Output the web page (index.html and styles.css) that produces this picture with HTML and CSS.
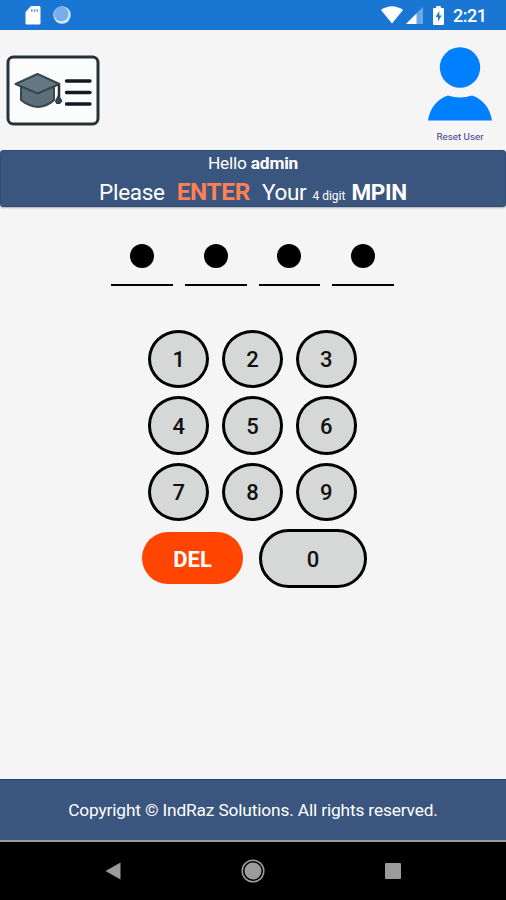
FILE: index.html
```html
<!DOCTYPE html>
<html lang="en">
<head>
    <meta charset="UTF-8">
    <meta name="viewport" content="width=device-width, initial-scale=1.0">
    <title>Enter MPIN</title>
    <link rel="stylesheet" href="styles.css">
</head>
<body>

    <div class="status-bar">
        <svg class="sd-icon" width="16" height="19" viewBox="0 0 16 19">
            <path fill="#fff" d="M6 0h8a1.500 1.500 0 0 1 1.500 1.500v15.500a1.500 1.500 0 0 1-1.500 1.500H2A1.500 1.500 0 0 1 .5 17V6z"/>
            <path fill="#6fa8e6" d="M6 3h1.500v3H6zM8.700 3h1.500v3H8.700zM11.400 3h1.500v3h-1.500z"/>
        </svg>
        <svg class="sync-icon" width="18" height="18" viewBox="0 0 18 18">
            <circle cx="9" cy="9" r="8.700" fill="#d5e8fb"/>
            <circle cx="8.300" cy="8" r="7.300" fill="#78aeea"/>
        </svg>
        <div class="status-right">
            <svg width="22" height="18" viewBox="0 0 22 18">
                <path fill="#fff" d="M0 4Q11-3.500 22 4L11 17.500z"/>
            </svg>
            <svg class="signal-icon" width="17" height="17" viewBox="0 0 17 17">
                <path fill="#6ca6e5" d="M17 0v17H0z"/>
                <path fill="#fff" d="M10.500 6.500V17H0z"/>
            </svg>
            <svg class="battery-icon" width="11" height="19" viewBox="0 0 11 19">
                <path fill="#fff" d="M3.200 0h4.600v2H10a1 1 0 0 1 1 1v15a1 1 0 0 1-1 1H1a1 1 0 0 1-1-1V3a1 1 0 0 1 1-1h2.200z"/>
                <path fill="#1976d2" d="M6.300 5L2.500 11h2.500v4.500l3.700-6H6.300z"/>
            </svg>
            <span class="clock">2:21</span>
        </div>
    </div>

    <div class="header">
        <svg class="logo" width="94" height="71" viewBox="0 0 94 71">
            <rect x="2" y="2" width="90" height="67" rx="5.500" fill="#fbfcfc" stroke="#263238" stroke-width="3"/>
            <path d="M15 30v15q7 6 17 7 10-1 16-7V30z" fill="#5c6e78" stroke="#37474f" stroke-width="2"/>
            <path d="M9.500 29L31.500 19 53.500 29 31.500 38.500z" fill="#657781" stroke="#37474f" stroke-width="2" stroke-linejoin="round"/>
            <path d="M53 30v12" stroke="#263238" stroke-width="2.500"/>
            <path d="M52.500 40l3.500 6-2 2.500h-3.500l-1-2.500z" fill="#37474f" stroke="#263238"/>
            <path d="M60.500 26h23.500M60.500 37.500h23.500M60.500 49h23.500" stroke="#101a20" stroke-width="3.400" stroke-linecap="round"/>
        </svg>
        <div class="reset-user">
            <svg width="64" height="74" viewBox="0 0 64 74">
                <circle cx="32" cy="20.500" r="20.200" fill="#0080ff"/>
                <path d="M0 73.500C2 61 9 52 20 48.500q12 4 24 0C55 52 62 61 64 73.500z" fill="#0080ff"/>
            </svg>
            <span>Reset User</span>
        </div>
    </div>

    <div class="banner">
        <div class="hello">Hello <b>admin</b></div>
        <div class="prompt">
            <span class="please">Please</span>
            <span class="enter">ENTER</span>
            <span>Your</span>
            <span class="digits">4 digit</span>
            <span class="mpin">MPIN</span>
        </div>
    </div>

    <div class="main">
        <div class="pin">
            <div class="pin-box"><i></i></div>
            <div class="pin-box"><i></i></div>
            <div class="pin-box"><i></i></div>
            <div class="pin-box"><i></i></div>
        </div>

        <div class="keypad">
            <button class="key">1</button>
            <button class="key">2</button>
            <button class="key">3</button>
            <button class="key">4</button>
            <button class="key">5</button>
            <button class="key">6</button>
            <button class="key">7</button>
            <button class="key">8</button>
            <button class="key">9</button>
        </div>
        <div class="keypad-bottom">
            <button class="del">DEL</button>
            <button class="key zero">0</button>
        </div>
    </div>

    <div class="footer">Copyright © IndRaz Solutions. All rights reserved.</div>

    <div class="nav-bar">
        <svg width="16" height="18" viewBox="0 0 16 18">
            <path fill="#9b9b9b" d="M15.500.5v17L.5 9z"/>
        </svg>
        <svg width="24" height="24" viewBox="0 0 24 24">
            <circle cx="12" cy="12" r="10.800" fill="none" stroke="#9b9b9b" stroke-width="1.500"/>
            <circle cx="12" cy="12" r="8.500" fill="#9b9b9b"/>
        </svg>
        <svg width="16" height="16" viewBox="0 0 16 16">
            <rect width="16" height="16" rx="1" fill="#9b9b9b"/>
        </svg>
    </div>

</body>
</html>
```
FILE: styles.css
```css
* {
    box-sizing: border-box;
}

body {
    margin: 0;
    height: 900px;
    display: flex;
    flex-direction: column;
    overflow: hidden;
    background-color: #f5f5f5;
    font-family: Roboto, "Liberation Sans", sans-serif;
}

svg {
    display: block;
    flex: none;
}

/* Status bar */
.status-bar {
    height: 30px;
    display: flex;
    align-items: center;
    padding: 0 19px 0 25px;
    background-color: #1976d2;
    color: #fff;
}

.sync-icon {
    margin-left: 12px;
}

.status-right {
    display: flex;
    align-items: center;
    margin-left: auto;
}

.signal-icon {
    margin-left: 3px;
}

.battery-icon {
    margin-left: 10px;
}

.clock {
    margin-left: 9px;
    width: 34px;
    font-size: 18px;
    font-weight: 500;
    letter-spacing: -0.5px;
    white-space: nowrap;
}

/* Header */
.header {
    height: 120px;
    display: flex;
    justify-content: space-between;
    padding: 17px 14px 0 6px;
}

.logo {
    margin-top: 8px;
}

.reset-user {
    display: flex;
    flex-direction: column;
    align-items: center;
    font-size: 9.8px;
    line-height: 12px;
    color: #3f3a86;
}

.reset-user span {
    margin-top: 10px;
}

/* Banner */
.banner {
    height: 57px;
    border: 1px solid #2d4e7c;
    border-radius: 3px;
    box-shadow: 0 1px 2px rgba(0, 0, 0, 0.3);
    background-color: #3a567e;
    color: #fff;
}

.hello {
    padding-top: 2px;
    font-size: 17.3px;
    line-height: 20px;
    letter-spacing: -0.2px;
    text-align: center;
}

.prompt {
    display: flex;
    align-items: baseline;
    justify-content: center;
    font-size: 22.5px;
    line-height: 37px;
    letter-spacing: -0.3px;
    white-space: nowrap;
}

.enter {
    margin: 0 12px;
    font-size: 24.3px;
    font-weight: 700;
    color: #ff8052;
}

.digits {
    margin: 0 6px;
    font-size: 12px;
    letter-spacing: 0;
}

.mpin {
    font-weight: 700;
}

/* PIN entry */
.main {
    flex: 1;
    display: flex;
    flex-direction: column;
    align-items: center;
}

.pin {
    display: flex;
    gap: 12px;
    margin-top: 37px;
    margin-right: 1px;
}

.pin-box {
    width: 61.8px;
    height: 42px;
    display: flex;
    justify-content: center;
    border-bottom: 2.5px solid #000;
}

.pin-box i {
    width: 24px;
    height: 24px;
    border-radius: 50%;
    background-color: #000;
}

.keypad {
    display: grid;
    grid-template-columns: repeat(3, 61.5px);
    gap: 8px 12.3px;
    margin-top: 43.5px;
    margin-right: 1px;
}

.key {
    height: 58.5px;
    padding: 2px 0 0;
    border: 3px solid #000;
    border-radius: 50%;
    background-color: #d6d8d7;
    color: #111;
    font-family: inherit;
    font-size: 22px;
    font-weight: 500;
}

.keypad-bottom {
    display: flex;
    align-items: center;
    gap: 16px;
    margin-top: 8px;
    padding-left: 3px;
}

.del {
    width: 101px;
    height: 52px;
    padding: 2px 0 0;
    border: none;
    border-radius: 26px;
    background-color: #ff4500;
    color: #fff;
    font-family: inherit;
    font-size: 22px;
    font-weight: 700;
}

.zero {
    width: 108px;
    border-radius: 30px;
}

/* Footer */
.footer {
    height: 61px;
    border-top: 1px solid #1f4475;
    background-color: #3a567e;
    color: #fff;
    font-size: 17.3px;
    line-height: 60px;
    letter-spacing: -0.14px;
    text-align: center;
}

.nav-bar {
    height: 60px;
    display: flex;
    align-items: center;
    justify-content: space-between;
    padding: 0 105px;
    border-top: 2px solid #9b9b9b;
    background-color: #000;
}
```
